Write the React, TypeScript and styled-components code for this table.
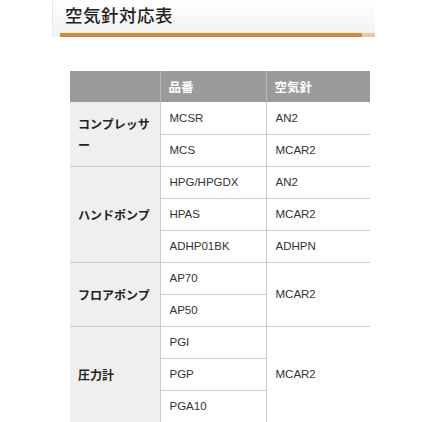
import React from 'react'
import styled, { createGlobalStyle } from 'styled-components'

const GlobalStyle = createGlobalStyle`
  html, body {
    margin: 0;
    padding: 0;
    background: #ffffff;
  }
  body {
    font-family: "Liberation Sans", "Noto Sans CJK JP", sans-serif;
  }
`

type Row = { part: string; needle?: string; needleSpan?: number }
type Group = { name: string; rows: Row[] }

const groups: Group[] = [
  {
    name: 'コンプレッサー',
    rows: [
      { part: 'MCSR', needle: 'AN2' },
      { part: 'MCS', needle: 'MCAR2' },
    ],
  },
  {
    name: 'ハンドポンプ',
    rows: [
      { part: 'HPG/HPGDX', needle: 'AN2' },
      { part: 'HPAS', needle: 'MCAR2' },
      { part: 'ADHP01BK', needle: 'ADHPN' },
    ],
  },
  {
    name: 'フロアポンプ',
    rows: [{ part: 'AP70', needle: 'MCAR2', needleSpan: 2 }, { part: 'AP50' }],
  },
  {
    name: '圧力計',
    rows: [
      { part: 'PGI', needle: 'MCAR2', needleSpan: 3 },
      { part: 'PGP' },
      { part: 'PGA10' },
    ],
  },
]

const App = () => {
  return (
    <Page>
      <GlobalStyle />
      <HeadBox>
        <Title>空気針対応表</Title>
        <OrangeBar>
          <BarTail />
        </OrangeBar>
      </HeadBox>
      <Table>
        <colgroup>
          <col style={{ width: 90 }} />
          <col style={{ width: 106 }} />
          <col style={{ width: 104 }} />
        </colgroup>
        <thead>
          <tr>
            <Th />
            <Th>品番</Th>
            <Th>空気針</Th>
          </tr>
        </thead>
        <tbody>
          {groups.map((g) =>
            g.rows.map((r, i) => (
              <Tr key={g.name + r.part}>
                {i === 0 && <GroupCell rowSpan={g.rows.length}>{g.name}</GroupCell>}
                <Td>{r.part}</Td>
                {r.needle && <Td rowSpan={r.needleSpan || 1}>{r.needle}</Td>}
              </Tr>
            ))
          )}
        </tbody>
      </Table>
    </Page>
  )
}

const Page = styled.div`
  width: 422px;
  height: 422px;
  overflow: hidden;
  display: flex;
  flex-direction: column;
`

const HeadBox = styled.div`
  margin-left: 52px;
  width: 323px;
  height: 38px;
  box-sizing: border-box;
  border-left: 1px solid #e8e8e8;
  background: linear-gradient(to bottom, #ffffff 0%, #f1f1f1 100%);
  display: flex;
  flex-direction: column;
`

const Title = styled.h1`
  margin: 0;
  padding: 5px 0 0 12px;
  height: 28px;
  box-sizing: border-box;
  font-family: "Noto Sans CJK JP", sans-serif;
  font-size: 17.5px;
  font-weight: 500;
  line-height: 20px;
  color: #222222;
  letter-spacing: 0.5px;
`

const OrangeBar = styled.div`
  margin: 5px 0 0 7px;
  height: 4px;
  background: #d7873a;
  display: flex;
  justify-content: flex-end;
`

const BarTail = styled.div`
  width: 13px;
  background: #e9c9a6;
`

const Table = styled.table`
  margin: 34px 0 0 70px;
  width: 300px;
  border-collapse: collapse;
  table-layout: fixed;
`

const Th = styled.th`
  height: 31px;
  padding: 0 0 0 8px;
  background: #9b9b9b;
  color: #ffffff;
  text-align: left;
  font-family: "Noto Sans CJK JP", sans-serif;
  font-size: 12.5px;
  font-weight: 700;
  border-left: 1px solid #b9b9b9;
  &:first-child {
    border-left: none;
  }
`

const Tr = styled.tr`
  height: 32px;
`

const GroupCell = styled.td`
  background: #efefef;
  padding: 0 6px 0 8px;
  font-family: "Noto Sans CJK JP", sans-serif;
  font-size: 12px;
  font-weight: 700;
  line-height: 21px;
  color: #222222;
  line-break: anywhere;
  border-bottom: 1px solid #cccccc;
  vertical-align: middle;
`

const Td = styled.td`
  padding: 0 0 0 9px;
  height: 31px;
  box-sizing: border-box;
  font-family: "Liberation Sans", "Noto Sans CJK JP", sans-serif;
  font-size: 11.5px;
  color: #333333;
  border-bottom: 1px solid #cccccc;
  border-left: 1px solid #cccccc;
  vertical-align: middle;
`

export default App
